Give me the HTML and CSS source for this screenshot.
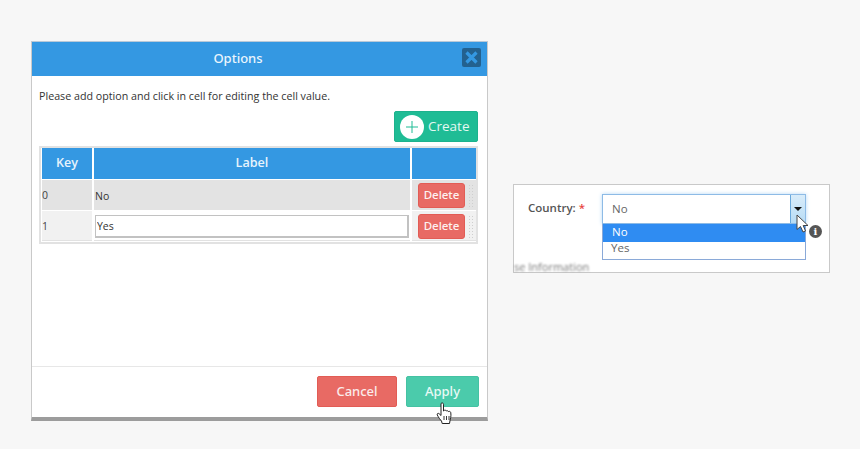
FILE: index.html
```html
<!DOCTYPE html>
<html lang="en">
<head>
<meta charset="utf-8">
<title>Options</title>
<link rel="stylesheet" href="styles.css">
</head>
<body>
<main class="page">
  <section class="dialog">
    <header class="dialog-head">
      <h1 class="dialog-title">Options</h1>
      <span class="close-btn">
        <svg width="13" height="13" viewBox="0 0 13 13"><path d="M1.500 1.500 11.500 11.500M11.500 1.500 1.500 11.500" stroke="#3498e2" stroke-width="3.200"/></svg>
      </span>
    </header>
    <div class="dialog-body">
      <p class="hint">Please add option and click in cell for editing the cell value.</p>
      <div class="create-row">
        <button class="create-btn">
          <span class="plus">
            <svg width="12" height="12" viewBox="0 0 12 12"><path d="M6 0V12M0 6H12" stroke="#1fbc95" stroke-width="1"/></svg>
          </span>
          Create
        </button>
      </div>
      <div class="table-wrap">
        <div class="grid">
          <div class="th">Key</div>
          <div class="th">Label</div>
          <div class="th"></div>

          <div class="td td-dark key">0</div>
          <div class="td td-dark label">No</div>
          <div class="td td-dark action"><button class="delete-btn">Delete</button><span class="grip"></span></div>

          <div class="td td-light key">1</div>
          <div class="td td-light label"><input class="cell-input" value="Yes"></div>
          <div class="td td-light action"><button class="delete-btn">Delete</button><span class="grip"></span></div>
        </div>
      </div>
    </div>
    <footer class="dialog-foot">
      <button class="btn btn-cancel">Cancel</button>
      <button class="btn btn-apply">Apply</button>
      <svg class="hand" width="18" height="23" viewBox="0 0 18 23"><path d="M5 1.500c1-1 2.400-.6 2.500.8V9l.7-.6c.9-.5 1.700-.2 2 .6.900-.6 1.900-.3 2.200.6.900-.5 2-.2 2.300.8.400 2 .3 4.600-.4 6.600l-.8 4.500H6.200l-.7-2.500C4.500 18 2.500 15.500 1.300 13c-.6-1.300.8-2.200 1.800-1.300L5 13.500z" fill="#fff" stroke="#222" stroke-width="1"/><path d="M8 14v4M10.500 14v4M13 14v4" stroke="#222" stroke-width=".9"/></svg>
    </footer>
  </section>

  <section class="country-card">
    <div class="field">
      <label class="field-label">Country: <span class="req">*</span></label>
      <div class="select-wrap">
        <div class="select-box">
          <span class="select-value">No</span>
          <span class="select-arrow"><i class="caret"></i></span>
        </div>
        <ul class="select-list">
          <li class="opt opt-active">No</li>
          <li class="opt">Yes</li>
        </ul>
        <svg class="pointer" width="13" height="19" viewBox="0 0 13 19"><path d="M1 1V15.500L4.500 12.500 7 18 9.500 17 7.200 11.500H12z" fill="#fff" stroke="#444" stroke-width="1"/></svg>
      </div>
      <span class="info-icon">i</span>
    </div>
    <div class="blurred">se Information</div>
  </section>
</main>
</body>
</html>
```
FILE: styles.css
```css
* { box-sizing: border-box; }
html, body { margin: 0; padding: 0; }
body {
  width: 860px;
  height: 449px;
  overflow: hidden;
  background: #f7f7f7;
  font-family: "Open Sans", "Noto Sans", sans-serif;
}
.page {
  display: flex;
  align-items: flex-start;
  padding: 41px 0 0 31px;
  gap: 25px;
}
button { font-family: inherit; cursor: pointer; }

.dialog {
  width: 457px;
  height: 380px;
  background: #fff;
  border: 1px solid #c9c9c9;
  border-bottom: 4px solid #9c9c9c;
  border-top-color: #b9c9d8;
  display: flex;
  flex-direction: column;
}
.dialog-head {
  height: 34px;
  flex: none;
  background: #3498e2;
  display: flex;
  align-items: center;
  justify-content: center;
  padding: 0 43px 3px 0;
  position: relative;
}
.dialog-title {
  margin: 0;
  color: #eaf5fd;
  font-family: "Noto Sans", sans-serif;
  font-size: 13px;
  font-weight: 500;
}
.close-btn {
  position: absolute;
  right: 6px;
  top: 6px;
  width: 19px;
  height: 19px;
  background: #23618f;
  border-radius: 2px;
  display: flex;
  align-items: center;
  justify-content: center;
}
.dialog-body {
  flex: 1;
  padding: 14px 9px 0 7px;
}
.hint {
  margin: 0;
  height: 14px;
  font-size: 10.700px;
  line-height: 13px;
  color: #333;
  white-space: nowrap;
}
.create-row {
  display: flex;
  justify-content: flex-end;
  margin-top: 7px;
}
.create-btn {
  width: 84px;
  height: 31px;
  padding: 0 0 2px 5px;
  background: #1fbc95;
  border: 1px solid #1db28d;
  border-radius: 2px;
  color: #e4f8f2;
  font-size: 13.500px;
  display: flex;
  align-items: center;
  gap: 4px;
}
.plus {
  width: 24px;
  height: 24px;
  margin-top: 2px;
  border-radius: 50%;
  background: #fff;
  display: flex;
  align-items: center;
  justify-content: center;
}
.table-wrap {
  margin-top: 4px;
  width: 439px;
  height: 98px;
  border: 2px solid #e2e2e2;
  padding-left: 1px;
  background: #fff;
}
.grid {
  display: grid;
  grid-template-columns: 50px 316px 64px;
  grid-template-rows: 31px 30px 30px;
  gap: 1px 2px;
}
.th {
  background: #3498e2;
  color: #e6f3fc;
  font-size: 12.600px;
  font-weight: 600;
  display: flex;
  align-items: center;
  justify-content: center;
  padding-bottom: 2px;
}
.td {
  display: flex;
  align-items: center;
  font-size: 10.500px;
  color: #333;
}
.td-dark { background: #e3e3e3; }
.td-light { background: #f1f1f1; border-bottom: 1px solid #e2e2e2; padding-top: 1px; }
.key { padding-left: 0; color: #444; }
.label { padding-left: 1px; }
.td-dark.label { padding-top: 1px; }
.td-light.label { background: #fff; }
.cell-input {
  width: 314px;
  height: 23px;
  border: 1px solid #c2c2c2;
  border-width: 1px 2px 2px 1px;
  font: inherit;
  font-size: 10.500px;
  color: #333;
  padding: 1px 1px 0;
  outline: none;
  background: #fff;
}
.action {
  padding-left: 6px;
  gap: 3px;
}
.delete-btn {
  width: 47px;
  height: 25px;
  padding: 0 0 2px;
  background: #e86a64;
  border: 1px solid #e25c55;
  border-radius: 3px;
  color: #fdf1f0;
  font-family: "Noto Sans", sans-serif;
  font-size: 11.500px;
  font-weight: 500;
}
.grip {
  width: 7px;
  height: 23px;
  background-image: radial-gradient(#cfcfcf 1px, transparent 1px);
  background-size: 3px 3px;
}
.dialog-foot {
  height: 51px;
  flex: none;
  border-top: 1px solid #e7e7e7;
  display: flex;
  justify-content: flex-end;
  align-items: flex-start;
  gap: 9px;
  padding: 9px 8px 0 0;
  position: relative;
}
.btn {
  height: 31px;
  border-radius: 2px;
  font-family: "Noto Sans", sans-serif;
  font-size: 13px;
  font-weight: 500;
  padding: 0 0 2px;
}
.btn-cancel {
  width: 80px;
  background: #e86a64;
  border: 1px solid #e25c55;
  color: #fbeceb;
}
.btn-apply {
  width: 73px;
  background: #4bcbab;
  border: 1px solid #45c2a3;
  color: #e9f9f5;
}
.hand {
  position: absolute;
  left: 404px;
  top: 35px;
}

.country-card {
  margin-top: 143px;
  width: 317px;
  height: 89px;
  background: #fff;
  border: 1px solid #c9c9c9;
  position: relative;
}
.field {
  display: flex;
  align-items: flex-start;
  padding: 9px 0 0 14px;
}
.field-label {
  width: 74px;
  font-size: 11.500px;
  font-weight: 600;
  line-height: 28px;
  color: #555;
}
.req { color: #e8443f; }
.select-wrap {
  position: relative;
  width: 204px;
}
.select-box {
  height: 30px;
  border: 1px solid #8dbbe6;
  box-shadow: 0 0 4px #b5d8f6;
  background: #fff;
  display: flex;
  align-items: center;
  justify-content: space-between;
}
.select-value {
  font-size: 11.500px;
  color: #666;
  padding: 0 0 2px 9px;
}
.select-arrow {
  width: 15px;
  height: 28px;
  background: linear-gradient(#d8ecfa, #b7dcf5);
  border-left: 1px solid #6aa9dc;
  display: flex;
  align-items: center;
  justify-content: center;
}
.caret {
  width: 0;
  height: 0;
  border-left: 4px solid transparent;
  border-right: 4px solid transparent;
  border-top: 4px solid #111;
}
.select-list {
  list-style: none;
  margin: 0;
  padding: 0;
  border: 1px solid #8aa9d8;
  border-top: 0;
  background: #fff;
  height: 36px;
}
.opt {
  height: 16px;
  line-height: 12px;
  font-size: 11.500px;
  color: #666;
  padding-left: 8px;
}
.opt-active {
  background: #2f8cf2;
  color: #fff;
  height: 18px;
  line-height: 16px;
  padding-left: 9px;
}
.pointer {
  position: absolute;
  left: 194px;
  top: 20px;
}
.info-icon {
  width: 13px;
  height: 13px;
  margin: 31px 0 0 3px;
  border-radius: 50%;
  background: #555;
  color: #fff;
  font-family: "DejaVu Serif", serif;
  font-size: 10px;
  font-weight: 700;
  line-height: 13px;
  text-align: center;
}
.blurred {
  position: absolute;
  left: 0;
  top: 75px;
  width: 82px;
  overflow: hidden;
  font-size: 11px;
  line-height: 13px;
  color: #777;
  filter: blur(1.200px);
  white-space: nowrap;
}
```
